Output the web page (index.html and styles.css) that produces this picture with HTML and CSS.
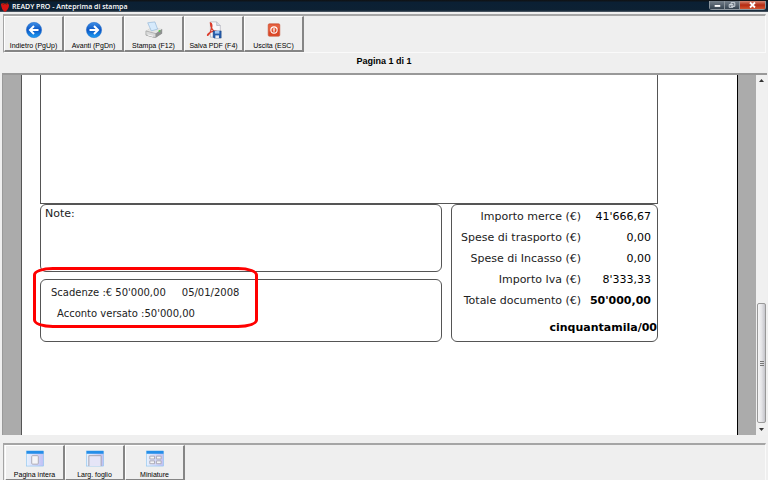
FILE: index.html
```html
<!DOCTYPE html>
<html lang="it">
<head>
    <meta charset="UTF-8">
    <meta name="viewport" content="width=device-width, initial-scale=1.0">
    <title>READY PRO - Anteprima di stampa</title>
    <link rel="stylesheet" href="styles.css">
</head>
<body>
    <header class="titlebar">
        <svg class="logo" viewBox="0 0 10 11">
            <path d="M1 3 Q3 1 5 3 Q8 1 9 4 Q9 8 5 11 Q1 8 1 3Z" fill="#d81412"/>
            <path d="M2 2 L5 3 L8 1 L7 4 L5 3 L3 4Z" fill="#6b2a12"/>
        </svg>
        <h1>READY PRO - Anteprima di stampa</h1>
        <div class="window-buttons">
            <button class="win-btn" aria-label="Riduci">
                <svg viewBox="0 0 15 8"><path d="M5 4h6v2H5z" fill="#fff"/></svg>
            </button>
            <button class="win-btn" aria-label="Ripristina">
                <svg viewBox="0 0 15 8"><path d="M6.5 1.5h4v4h-4zM4.500 3.500h4v3h-4z" fill="none" stroke="#d5dbe2"/></svg>
            </button>
            <button class="win-btn win-close" aria-label="Chiudi">
                <svg viewBox="0 0 25 8"><path d="M10 1.500l5 5M15 1.500l-5 5" stroke="#fff" stroke-width="1.800"/></svg>
            </button>
        </div>
    </header>

    <nav class="toolbar">
        <button class="tool">
            <svg viewBox="0 0 20 20">
                <defs>
                    <linearGradient id="blue" x1="0" y1="0" x2="0" y2="1">
                        <stop offset="0" stop-color="#3f8fe6"/>
                        <stop offset=".5" stop-color="#0b56c4"/>
                        <stop offset="1" stop-color="#1fa0f5"/>
                    </linearGradient>
                </defs>
                <circle cx="10" cy="10" r="8.500" fill="url(#blue)" stroke="#1763c4" stroke-width=".5"/>
                <path d="M15 10H6M10 5.500L5.500 10l4.500 4.500" fill="none" stroke="#fff" stroke-width="2.200"/>
            </svg>
            Indietro (PgUp)
        </button>
        <button class="tool">
            <svg viewBox="0 0 20 20">
                <circle cx="10" cy="10" r="8.500" fill="url(#blue)" stroke="#1763c4" stroke-width=".5"/>
                <path d="M5 10h9M10 5.500l4.500 4.500-4.500 4.500" fill="none" stroke="#fff" stroke-width="2.200"/>
            </svg>
            Avanti (PgDn)
        </button>
        <button class="tool">
            <svg viewBox="0 0 20 20">
                <path d="M1 11l5-3 13 1v5l-8 5-10-3z" fill="#a9abaa"/>
                <path d="M1 11l5-3 13 1-7 5z" fill="#e4e5e4"/>
                <path d="M1 11l11 3v4.500L1 15.500z" fill="#d8d9d9" stroke="#8b8d8d" stroke-width=".5"/>
                <path d="M12 14l7-5v5l-7 4.500z" fill="#8e9090"/>
                <path d="M3 2l8-1 3 8-7 2z" fill="#d6eafc" stroke="#80aad0" stroke-width=".6"/>
                <path d="M3 15.500l6 1.500" stroke="#fff"/>
                <circle cx="16" cy="11" r="1" fill="#54d643"/>
            </svg>
            Stampa (F12)
        </button>
        <button class="tool">
            <svg viewBox="0 0 20 20">
                <path d="M6 1h7l4 4v13H6z" fill="#f7f7fa" stroke="#a7a9b5" stroke-width=".7"/>
                <path d="M13 1v4h4" fill="#dadce6" stroke="#a7a9b5" stroke-width=".7"/>
                <path d="M6 2c2 0 2 4 1 7s-3 7-4 7 1-3 4-4 6-1 6 0-3 0-5-3-2-7-2-7z" fill="none" stroke="#dc3b2b" stroke-width="1.400"/>
                <path d="M9 11h9v8H10l-1-1z" fill="#245cab" stroke="#173f7c" stroke-width=".5"/>
                <path d="M11 11h5v3h-5z" fill="#9ec6f2"/>
                <path d="M11.500 16h4v3h-4z" fill="#e9edf5"/>
            </svg>
            Salva PDF (F4)
        </button>
        <button class="tool">
            <svg viewBox="0 0 20 20">
                <rect x="3.500" y="3" width="13" height="14" rx="1.500" fill="#dc4727" stroke="#c6674f" stroke-width=".7"/>
                <path d="M4 4h12v4L4 12z" fill="#e86c4c" opacity=".7"/>
                <circle cx="10" cy="10" r="3.500" fill="none" stroke="#fff" stroke-width="1.200"/>
                <path d="M10 8v4" stroke="#fff" stroke-width="1.400"/>
            </svg>
            Uscita (ESC)
        </button>
    </nav>

    <div class="page-count">Pagina 1 di 1</div>

    <main class="viewer">
        <div class="paper">
            <div class="items"></div>
            <div class="footer-grid">
                <div class="left-col">
                    <section class="box notes">Note:</section>
                    <section class="box due">
                        <p><span>Scadenze :€ 50'000,00</span><span>05/01/2008</span></p>
                        <p class="deposit">Acconto versato :50'000,00</p>
                        <div class="highlight"></div>
                    </section>
                </div>
                <section class="box totals">
                    <table>
                        <tr><th>Importo merce (€)</th><td>41'666,67</td></tr>
                        <tr><th>Spese di trasporto (€)</th><td>0,00</td></tr>
                        <tr><th>Spese di Incasso (€)</th><td>0,00</td></tr>
                        <tr><th>Importo Iva (€)</th><td>8'333,33</td></tr>
                        <tr class="grand"><th>Totale documento (€)</th><td>50'000,00</td></tr>
                    </table>
                    <p class="in-words">cinquantamila/00</p>
                </section>
            </div>
        </div>
        <div class="scrollbar">
            <svg class="arrow" viewBox="0 0 11 12"><path d="M3 7l2.500-3L8 7z" fill="#333"/></svg>
            <div class="thumb"><i></i><i></i><i></i></div>
            <svg class="arrow" viewBox="0 0 11 12"><path d="M3 5l2.500 3L8 5z" fill="#333"/></svg>
        </div>
    </main>

    <nav class="toolbar toolbar-bottom">
        <button class="tool">
            <svg viewBox="0 0 20 18">
                <defs>
                    <linearGradient id="pane" x1="0" y1="0" x2="1" y2="0">
                        <stop offset="0" stop-color="#e8f2ff"/>
                        <stop offset="1" stop-color="#bfc0f5"/>
                    </linearGradient>
                </defs>
                <rect x="1" y="1" width="18" height="16" fill="url(#pane)" stroke="#83c0ef" stroke-width=".6"/>
                <path d="M1 1h18v3H1z" fill="#258ee8"/>
                <rect x="6.500" y="6" width="7" height="9" rx="1" fill="#f5f5f7" stroke="#aaa9b5"/>
            </svg>
            Pagina intera
        </button>
        <button class="tool">
            <svg viewBox="0 0 20 18">
                <rect x="1" y="1" width="18" height="16" fill="url(#pane)" stroke="#83c0ef" stroke-width=".6"/>
                <path d="M1 1h18v3H1z" fill="#258ee8"/>
                <path d="M3.500 17V6h13v11" fill="#e5e5f7" stroke="#a3a1ad"/>
            </svg>
            Larg. foglio
        </button>
        <button class="tool">
            <svg viewBox="0 0 20 18">
                <rect x="1" y="1" width="18" height="16" fill="url(#pane)" stroke="#83c0ef" stroke-width=".6"/>
                <path d="M1 1h18v3H1z" fill="#258ee8"/>
                <path d="M4.500 6.500h5v3h-5zM11.500 6.500h5v3h-5zM4.500 11.500h5v3h-5zM11.500 11.500h5v3h-5z" fill="#f5f5f7" stroke="#aaa9b5"/>
            </svg>
            Miniature
        </button>
    </nav>
</body>
</html>
```

FILE: styles.css
```css
* { box-sizing: border-box; }
body { margin: 0; height: 100vh; display: flex; flex-direction: column; overflow: hidden; background: #efefef; color: #000; font-family: "Liberation Sans", Arial, sans-serif; }
button { border: none; padding: 0; font-family: inherit; color: inherit; background: none; }
p { margin: 0; }

.titlebar { display: flex; align-items: center; flex: none; height: 12px; background: linear-gradient(#111 0, #0b2034 20%, #0d2133 85%, #59636d 100%); color: #fff; }
.logo { width: 10px; height: 11px; }
.titlebar h1 { flex: 1; margin: 0 2px; font: 600 7px/11px "Open Sans", sans-serif; }
.window-buttons { display: flex; align-self: flex-start; margin: 1px 2px 0 0; border: 1px solid #8d969e; border-top: none; border-radius: 0 0 3px 3px; }
.win-btn { display: flex; width: 15px; height: 8px; background: linear-gradient(#76818c, #34424f); border-right: 1px solid #8d969e; }
.win-btn svg { width: 100%; height: 8px; }
.win-close { width: 25px; border-right: none; background: linear-gradient(#d48672, #b52a12 50%, #d2532f); }

.toolbar { display: flex; flex: none; height: 39px; margin: 2px 2px 0 3px; border-top: 2px solid #a5a5a5; border-left: 1px solid #a5a5a5; border-bottom: 1px solid #fafafa; border-right: 1px solid #fafafa; }
.tool { display: flex; flex-direction: column; align-items: center; flex: none; width: 60px; height: 36px; padding-top: 4px; border: 1px solid #fff; border-right: 2px solid #858585; border-bottom: 2px solid #858585; background: #efefef; font-size: 7px; line-height: 8px; white-space: nowrap; }
.tool svg { width: 20px; height: 20px; margin-bottom: 3px; }
.toolbar-bottom { height: 37px; margin-top: 8px; padding-left: 1px; border-bottom: none; overflow: hidden; }
.toolbar-bottom .tool svg { height: 18px; margin-bottom: 4px; }

.page-count { flex: none; height: 20px; padding-top: 2px; font-size: 9px; line-height: 12px; font-weight: bold; text-align: center; }

.viewer { display: flex; flex: 1; min-height: 0; margin: 0 1px 0 2px; padding-left: 18px; background: #ababab; border-top: 2px solid #999; border-left: 1px solid #999; }
.paper { flex: 1; padding: 0 79px 0 18px; margin-right: 18px; background: #fff; border-left: 1px solid #555; border-right: 1px solid #000; font: 11px/21px "DejaVu Sans", Verdana, sans-serif; color: #222; overflow: hidden; }
.items { height: 129px; border: 1px solid #555; border-top: none; }
.footer-grid { display: grid; grid-template-columns: 402fr 207fr; gap: 9px; }
.left-col { display: flex; flex-direction: column; gap: 7px; }
.box { border: 1px solid #555; border-radius: 6px; }
.notes { height: 68px; padding-left: 4px; line-height: 18px; }
.due { position: relative; height: 63px; padding: 2px 10px; font-size: 10px; }
.due p { display: flex; gap: 16px; }
.due .deposit { padding-left: 6px; }
/* red marker drawn over the due dates */
.highlight { position: absolute; left: -8px; top: -13px; width: 225px; height: 61px; border: 3px solid #f00; border-radius: 20px / 8px; }

.totals { padding-top: 1px; }
.totals table { width: 100%; border-collapse: collapse; }
.totals th, .totals td { padding: 0; text-align: right; white-space: nowrap; }
.totals th { font-weight: normal; }
.totals td { width: 76px; padding-right: 6px; color: #000; }
.grand td, .in-words { font-weight: bold; color: #000; }
.in-words { padding-top: 6px; text-align: right; }

.scrollbar { display: flex; flex-direction: column; flex: none; width: 11px; background: #f0f0f0; }
.arrow { flex: none; width: 11px; height: 12px; }
.thumb { display: flex; flex-direction: column; align-items: center; justify-content: center; gap: 1px; height: 120px; margin: auto 1px 0; border: 1px solid #999; border-radius: 2px; background: linear-gradient(90deg, #f5f5f5, #e5e5e8 50%, #c5c5cb); }
.thumb i { width: 4px; height: 1px; background: #777; }
```
